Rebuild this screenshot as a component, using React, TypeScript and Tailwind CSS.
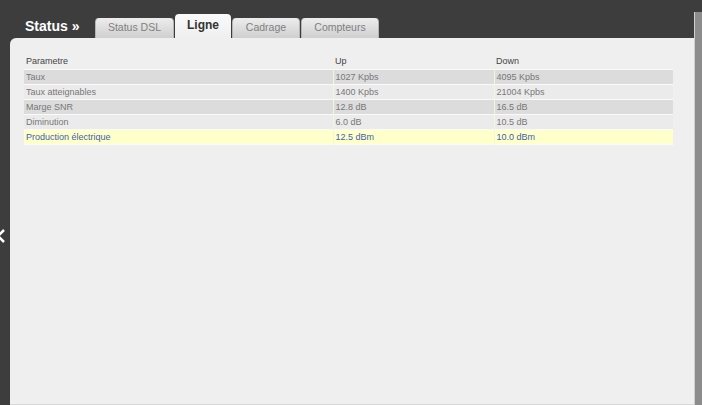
import React from "react";

type Row = { name: string; up: string; down: string };

const rows: Row[] = [
  { name: "Taux", up: "1027 Kpbs", down: "4095 Kpbs" },
  { name: "Taux atteignables", up: "1400 Kpbs", down: "21004 Kpbs" },
  { name: "Marge SNR", up: "12.8 dB", down: "16.5 dB" },
  { name: "Diminution", up: "6.0 dB", down: "10.5 dB" },
  { name: "Production électrique", up: "12.5 dBm", down: "10.0 dBm" },
];

const Tab = (props: { label: string; active?: boolean; width: string }) => {
  if (props.active) {
    return (
      <div
        className={`${props.width} h-[24px] rounded-t-[4px] bg-gradient-to-b from-[#fafafa] to-[#efefef] flex items-center justify-center text-[12px] font-bold text-[#333] pb-[3px]`}
      >
        {props.label}
      </div>
    );
  }
  return (
    <div
      className={`${props.width} h-[20px] rounded-t-[4px] bg-gradient-to-b from-[#ededed] to-[#cfcfcf] flex items-center justify-center text-[10.5px] text-[#808080] border-x border-[#b5b5b5]`}
    >
      {props.label}
    </div>
  );
};

export default function App() {
  return (
    <div
      className="relative w-[702px] h-[405px] bg-[#3d3d3d] flex overflow-hidden"
      style={{ fontFamily: '"Liberation Sans", Arial, sans-serif' }}
    >
      {/* left chevron */}
      <svg
        className="absolute left-[-4px] top-[229px]"
        width="10"
        height="14"
        viewBox="0 0 10 14"
      >
        <path d="M8 1 L2 7 L8 13" stroke="#fff" strokeWidth="2.5" fill="none" />
      </svg>

      <div className="flex flex-col w-[684px] ml-[10px]">
        {/* Header + tabs */}
        <div className="h-[38px] flex items-end shrink-0">
          <h1 className="ml-[15px] mb-[1px] text-[14px] font-bold text-white w-[70px]">
            Status »
          </h1>
          <div className="flex items-end gap-[1px]">
            <Tab label="Status DSL" width="w-[79px]" />
            <Tab label="Ligne" width="w-[56px]" active />
            <Tab label="Cadrage" width="w-[68px]" />
            <Tab label="Compteurs" width="w-[78px]" />
          </div>
        </div>

        {/* Panel */}
        <div className="flex-1 bg-[#efefef] rounded-tl-[6px] pt-[16px] pl-[14px] pr-[21px] border-b border-[#d8d8d8]">
          <table className="w-[649px] border-collapse text-[9px] leading-[14px]">
            <thead>
              <tr className="text-[#444] border-b border-[#fafafa]">
                <th className="w-[309px] text-left font-normal px-[2px] h-[15px]">
                  Parametre
                </th>
                <th className="w-[161px] text-left font-normal px-[2px]">Up</th>
                <th className="text-left font-normal px-[2px]">Down</th>
              </tr>
            </thead>
            <tbody>
              {rows.map((r, i) => {
                const last = i === rows.length - 1;
                const bg = last
                  ? "bg-[#ffffcc] text-[#3d5fae]"
                  : i % 2 === 0
                  ? "bg-[#dcdcdc] text-[#777]"
                  : "bg-[#ebebeb] text-[#777]";
                return (
                  <tr key={r.name} className={`${bg} border-b border-[#fafafa]`}>
                    <td className="px-[2px] h-[15px]">{r.name}</td>
                    <td className="px-[2px] border-l border-[#f4f4e0]">{r.up}</td>
                    <td className="px-[2px] border-l border-[#f4f4e0]">{r.down}</td>
                  </tr>
                );
              })}
            </tbody>
          </table>
        </div>
      </div>

      {/* right strip */}
      <div className="w-[8px] mt-[12px] bg-[#8c8c8c] border-l border-[#cfcfcf]" />
    </div>
  );
}
